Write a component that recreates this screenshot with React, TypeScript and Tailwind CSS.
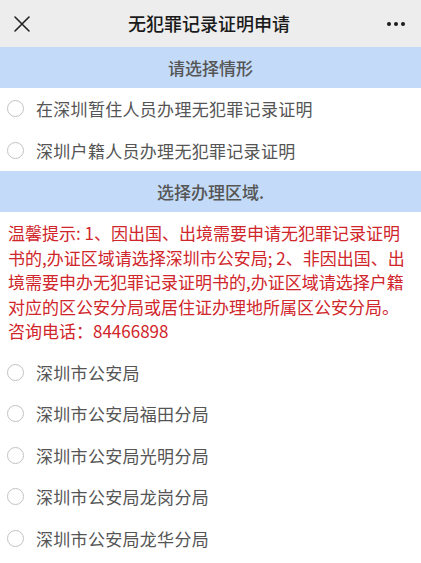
import React from 'react'

const situations = ['在深圳暂住人员办理无犯罪记录证明', '深圳户籍人员办理无犯罪记录证明']

const areas = [
  '深圳市公安局',
  '深圳市公安局福田分局',
  '深圳市公安局光明分局',
  '深圳市公安局龙岗分局',
  '深圳市公安局龙华分局',
]

const font = { fontFamily: '"Noto Sans CJK SC", "Noto Sans", sans-serif' }

const SectionBar = ({ title }: { title: string }) => (
  <div className="h-[41px] flex items-center justify-center bg-[#c3dbf8] text-[#555] text-[17px] font-medium">
    {title}
  </div>
)

const RadioRow = ({ label }: { label: string }) => (
  <div className="h-[41.5px] flex items-center pl-[7px]">
    <span className="w-[17px] h-[17px] rounded-full border border-[#c2c2c2] bg-white shrink-0" />
    <span className="ml-[12px] text-[17px] text-[#555] tracking-[0.3px]">{label}</span>
  </div>
)

export default function App() {
  return (
    <div className="w-[421px] h-[563px] overflow-hidden bg-white" style={font}>
      <div className="h-[47px] flex items-center justify-between bg-[#ededed] px-[12px]">
        <svg width="18" height="18" viewBox="0 0 18 18" className="ml-[1px]">
          <path d="M2 2 L16 16 M16 2 L2 16" stroke="#222" strokeWidth="1.6" strokeLinecap="round" />
        </svg>
        <div className="text-[18px] text-[#1a1a1a] font-medium">无犯罪记录证明申请</div>
        <div className="flex gap-[3px] mr-[4px]">
          <span className="w-[4px] h-[4px] rounded-full bg-[#1a1a1a]" />
          <span className="w-[4px] h-[4px] rounded-full bg-[#1a1a1a]" />
          <span className="w-[4px] h-[4px] rounded-full bg-[#1a1a1a]" />
        </div>
      </div>

      <SectionBar title="请选择情形" />
      {situations.map((s) => (
        <RadioRow key={s} label={s} />
      ))}

      <SectionBar title="选择办理区域." />
      <div className="px-[8px] pt-[9px] pb-[8px] text-[17px] leading-[24.5px] text-[#d0262b]">
        温馨提示: 1、因出国、出境需要申请无犯罪记录证明书的,办证区域请选择深圳市公安局; 2、非因出国、出境需要申办无犯罪记录证明书的,办证区域请选择户籍对应的区公安分局或居住证办理地所属区公安分局。咨询电话：84466898
      </div>
      {areas.map((a) => (
        <RadioRow key={a} label={a} />
      ))}
    </div>
  )
}
